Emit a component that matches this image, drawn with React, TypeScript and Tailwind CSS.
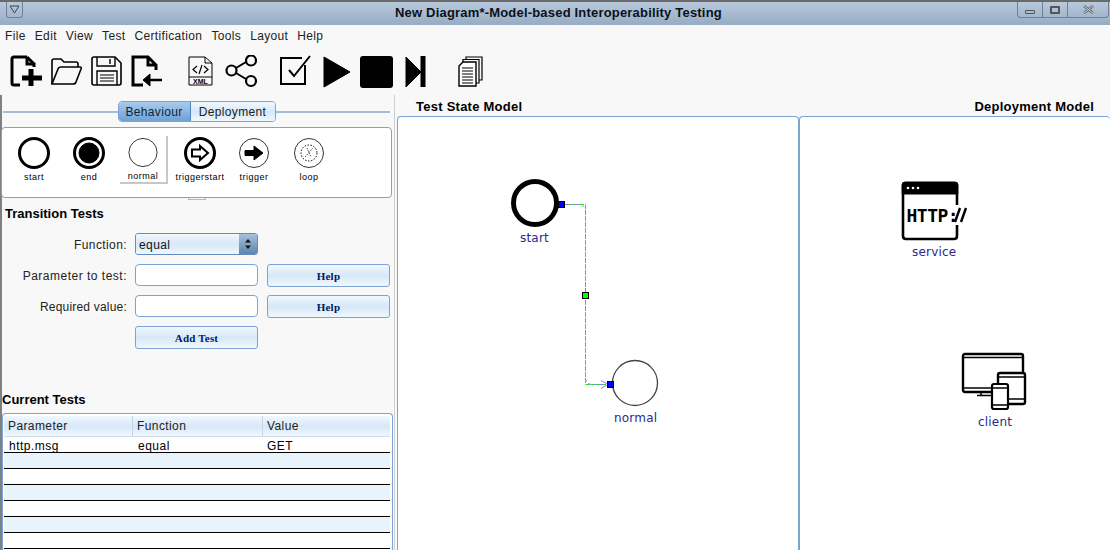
import React from "react";

const Ic = ({ w = 36, h = 36, children }: { w?: number; h?: number; children: React.ReactNode }) => (
  <svg width={w} height={h} viewBox={`0 0 ${w} ${h}`} className="block shrink-0" fill="none" stroke="#000">
    {children}
  </svg>
);

const Menu = ["File", "Edit", "View", "Test", "Certification", "Tools", "Layout", "Help"];

const Toolbar = () => (
  <div className="flex h-[49px] items-start pl-[10px] pt-[9px] bg-[#f8f8f8]">
    <Ic w={33} h={33}>
      <path d="M17 2H4Q2 2 2 4V28Q2 30 4 30H10M17 2V9H24V12M17 2L24 9" strokeWidth="3" />
      <path d="M21 14V31M12 23H32" strokeWidth="5" />
    </Ic>
    <div className="ml-[7px]">
      <Ic w={32} h={33}>
        <path d="M2 29V6Q2 4 4 4H11L14 7H26Q28 7 28 9V12" strokeWidth="1.6" />
        <path d="M2 29L8 14Q8.5 12 11 12H30Q32 12 31 14L26 27Q25.5 29 23 29Z" strokeWidth="1.6" />
      </Ic>
    </div>
    <div className="ml-[9px]">
      <Ic w={31} h={33}>
        <path d="M3 2H24L30 8V28Q30 30 28 30H3Q1 30 1 28V4Q1 2 3 2Z" strokeWidth="1.6" />
        <path d="M6 2V11H24V2M19 4V9" strokeWidth="1.4" />
        <path d="M6 30V16H26V30" strokeWidth="1.4" />
        <path d="M9 20H23M9 23H23M9 26H23" strokeWidth="1.2" />
      </Ic>
    </div>
    <div className="ml-[8px]">
      <Ic w={33} h={33}>
        <path d="M13 30H3V2H18L26 10V15M18 2V10H26" strokeWidth="3" />
        <path d="M32 25H15" strokeWidth="2.5" />
        <path d="M13 25L20 19V31Z" fill="#000" strokeWidth="1" />
      </Ic>
    </div>
    <div className="ml-[24px]">
      <Ic w={28} h={33}>
        <path d="M2 2H18L25 8V30H2Z" strokeWidth="1" />
        <path d="M18 2V8H25" strokeWidth="1" />
        <path d="M2 22H25" strokeWidth="1" />
        <path d="M10 11L6 14.5L10 18M17 11L21 14.5L17 18M15 10L12 19" strokeWidth="1.2" />
        <text x="13.5" y="29" fontSize="7" fontFamily="Liberation Sans" fontWeight="700" textAnchor="middle" fill="#000" stroke="none">XML</text>
      </Ic>
    </div>
    <div className="ml-[10px]">
      <Ic w={33} h={33}>
        <path d="M11 13L21 7M11 18L21 24" strokeWidth="2" />
        <circle cx="6.5" cy="15.5" r="5" strokeWidth="2.2" />
        <circle cx="26" cy="5.5" r="5" strokeWidth="2.2" />
        <circle cx="26" cy="26" r="5" strokeWidth="2.2" />
      </Ic>
    </div>
    <div className="ml-[21px]">
      <Ic w={33} h={33}>
        <path d="M26 10V29H2V3H23" strokeWidth="2" />
        <path d="M10 15L15 21L31 1" strokeWidth="2" />
      </Ic>
    </div>
    <div className="ml-[11px]">
      <Ic w={28} h={33}>
        <path d="M1 2L27 17L1 32Z" fill="#000" strokeWidth="1" strokeLinejoin="round" />
      </Ic>
    </div>
    <div className="ml-[9px] mt-[1px] w-[33px] h-[32px] bg-black rounded-[3px]" />
    <div className="ml-[12px]">
      <Ic w={23} h={33}>
        <path d="M1 2L16 17L1 32Z" fill="#000" strokeWidth="1" />
        <rect x="15.5" y="1" width="5" height="31" fill="#000" stroke="none" />
      </Ic>
    </div>
    <div className="ml-[29px]">
      <Ic w={27} h={33}>
        <path d="M9 5V2H25V25H22M6 7V4.5H22V28H19" strokeWidth="1.2" />
        <path d="M2 11L6 7H19V31H2Z" fill="#fff" strokeWidth="1.4" />
        <path d="M5 13H16M5 16H16M5 19H16M5 22H16M5 25H16M5 28H16" strokeWidth="1.2" />
      </Ic>
    </div>
  </div>
);

const grad = "bg-gradient-to-b from-[#f2f8fd] via-[#d6e8f8] to-[#f0f7fd]";

const Palette = ({ label, children, sel, w }: { label: string; children: React.ReactNode; sel?: boolean; w: string }) => (
  <div className={`flex flex-col items-center ${w} ${sel ? "h-[48px] border-r-2 border-b-2 border-[#c8c8c8]" : ""}`}>
    <svg width="34" height="34" viewBox="0 0 34 34" className="block" fill="none" stroke="#000">
      {children}
    </svg>
    <span className="text-[9px] leading-[12px] mt-[1px] tracking-[0.5px] text-black whitespace-nowrap">{label}</span>
  </div>
);

const Button = ({ children }: { children: string }) => (
  <div className={`h-[23px] w-[123px] pt-[2px] rounded-[3px] border border-[#7ba3d4] ${grad} flex items-center justify-center text-[11px] tracking-[0.2px] font-bold text-[#001a66] font-['Liberation_Serif',serif]`}>
    {children}
  </div>
);

const Input = () => <div className="h-[22px] w-[123px] rounded-[4px] border border-[#7ba3d4] bg-white" />;

const Label = ({ children, cls }: { children: string; cls: string }) => (
  <div className={`w-[125px] text-right text-[12px] leading-[24px] text-[#222] mr-[8px] whitespace-nowrap ${cls}`}>{children}</div>
);

const rows = [0, 1, 2, 3, 4, 5, 6];

const Left = () => (
  <div className="w-[394px] shrink-0 h-full border-l-2 border-l-[#808080] flex flex-col">
    <div className="flex items-center h-[23px] mt-[5px] pl-[1px] pr-[4px]">
      <div className="flex-1 h-[2px] bg-[#a4bcd8]" />
      <div className="flex h-[21px] text-[12px] tracking-[0.35px] rounded-[4px] border border-[#7ba3d4] overflow-hidden">
        <div className="w-[72px] flex items-center justify-center bg-gradient-to-b from-[#a9cbeb] to-[#6fa1d4] text-[#10233a] border-r border-[#4f84bd]">Behaviour</div>
        <div className={`w-[84px] flex items-center justify-center ${grad} text-[#222]`}>Deployment</div>
      </div>
      <div className="flex-1 h-[2px] bg-[#a4bcd8]" />
    </div>
    <div className="h-[71px] w-[391px] mt-[4px] -ml-[1px] rounded-[4px] border border-[#7ba3d4] bg-white flex pl-[7px] pt-[8px]">
      <Palette label="start" w="w-[50px]">
        <circle cx="17" cy="17" r="14.5" strokeWidth="3" />
      </Palette>
      <Palette label="end" w="w-[60px]">
        <circle cx="17" cy="17" r="14.5" strokeWidth="3" />
        <circle cx="17" cy="17" r="10" fill="#000" />
      </Palette>
      <Palette label="normal" w="w-[48px] ml-[1px]" sel>
        <circle cx="17" cy="17" r="14.5" strokeWidth="0.8" />
      </Palette>
      <Palette label="triggerstart" w="w-[64px]">
        <circle cx="17" cy="17" r="14.5" strokeWidth="3" />
        <path d="M9 13.5H17V10L25 17L17 24V20.5H9Z" strokeWidth="2" />
      </Palette>
      <Palette label="trigger" w="w-[44px]">
        <circle cx="17" cy="17" r="14.5" strokeWidth="0.8" />
        <path d="M8 14.5H17V10L26 17L17 24V19.5H8Z" fill="#000" strokeWidth="1" />
      </Palette>
      <Palette label="loop" w="w-[50px] ml-[8px]">
        <circle cx="17" cy="17" r="14.5" strokeWidth="0.8" />
        <circle cx="17" cy="17" r="8" strokeWidth="1" strokeDasharray="1.5 1.5" />
        <path d="M13 21L21 12M15 12L19 21" strokeWidth="0.7" strokeDasharray="1.5 1" />
      </Palette>
    </div>
    <div className="relative h-0">
      <div className="absolute left-[186px] top-0 w-[18px] h-[2px] border-x border-b border-[#a4bcd8]" />
    </div>
    <div className="text-[13px] font-bold leading-[14px] mt-[9px] ml-[3px] text-black">Transition Tests</div>
    <div className="mt-[12px] flex items-start h-[22px]">
      <Label cls="tracking-[0.4px]">Function:</Label>
      <div className="h-[22px] w-[123px] rounded-[3px] border border-[#5f8cc4] flex overflow-hidden">
        <div className={`flex-1 ${grad} text-[12px] tracking-[0.4px] leading-[22px] pl-[3px] text-[#111]`}>equal</div>
        <div className="w-[18px] bg-gradient-to-b from-[#a7c0dc] to-[#5f84ad] flex items-center justify-center">
          <svg width="8" height="12" viewBox="0 0 8 12" className="block"><path d="M4 1L7 4.5H1ZM4 11L1 7.5H7Z" fill="#111" /></svg>
        </div>
      </div>
    </div>
    <div className="mt-[9px] flex items-start h-[23px]">
      <Label cls="tracking-[0.5px]">Parameter to test:</Label>
      <Input />
      <div className="ml-[9px]"><Button>Help</Button></div>
    </div>
    <div className="mt-[8px] flex items-start h-[23px]">
      <Label cls="tracking-[0.2px]">Required value:</Label>
      <Input />
      <div className="ml-[9px]"><Button>Help</Button></div>
    </div>
    <div className="mt-[8px] ml-[133px]"><Button>Add Test</Button></div>
    <div className="text-[13px] font-bold leading-[14px] mt-[44px] text-black">Current Tests</div>
    <div className="mt-[6px] w-[391px] flex-1 min-h-0 rounded-t-[4px] border border-b-0 border-[#7ba3d4] bg-white pt-[2px] pl-[1px] pr-[2px] overflow-hidden">
      <div className={`h-[21px] w-[386px] flex text-[12px] tracking-[0.4px] text-[#222] leading-[20px] ${grad} border-b border-[#cfdce9]`}>
        <div className="w-[129px] pl-[4px] border-r border-[#c4d4e6]">Parameter</div>
        <div className="w-[130px] pl-[4px] border-r border-[#c4d4e6]">Function</div>
        <div className="pl-[4px]">Value</div>
      </div>
      <div className="w-[386px]">
        {rows.map((i) => (
          <div key={i} className={`h-[16px] border-b border-black text-[12px] tracking-[0.5px] leading-[18px] flex ${i % 2 === 1 ? "bg-[#e9f3fb]" : "bg-white"}`}>
            {i === 0 && (
              <>
                <div className="w-[129px] pl-[5px]">http.msg</div>
                <div className="w-[130px] pl-[5px]">equal</div>
                <div className="pl-[4px]">GET</div>
              </>
            )}
          </div>
        ))}
      </div>
    </div>
  </div>
);

const NodeLabel = ({ children, cls }: { children: string; cls: string }) => (
  <div className={`absolute text-[12px] leading-[15px] tracking-[0.2px] text-[#2a2a8c] font-['DejaVu_Sans',sans-serif] ${cls}`}>{children}</div>
);

const Diagram = () => (
  <div className="relative w-[402px] shrink-0 rounded-t-[4px] border border-b-0 border-[#7ba3d4] bg-white overflow-hidden">
    <svg width="300" height="330" viewBox="0 0 300 330" className="absolute left-[90px] top-[50px]" fill="none">
      <circle cx="47" cy="36" r="21.5" stroke="#000" strokeWidth="5" />
      <circle cx="147" cy="216" r="22.5" stroke="#444" strokeWidth="1.3" />
      <path d="M73 37.5H97.5V217.5H118" stroke="#1fe81f" strokeWidth="1" strokeDasharray="5 1" />
      <path d="M76 37.5H90Q97.5 37.5 97.5 45V210Q97.5 217.5 105 217.5H118" stroke="#8a80f0" strokeWidth="1" strokeDasharray="3 3" />
      <path d="M113 213.5L120 217.5L113 221.5" stroke="#8a80f0" />
      <rect x="70.5" y="34.5" width="6" height="6" fill="#0000ff" stroke="#000" strokeWidth="1" />
      <rect x="94.5" y="125.5" width="6" height="6" fill="#00ff00" stroke="#000" strokeWidth="1" />
      <rect x="119.5" y="214.5" width="6" height="6" fill="#0000ff" stroke="#000" strokeWidth="1" />
    </svg>
    <NodeLabel cls="left-[122px] top-[114px]">start</NodeLabel>
    <NodeLabel cls="left-[216px] top-[294px]">normal</NodeLabel>
  </div>
);

const Deploy = () => (
  <div className="relative flex-1 rounded-t-[4px] border-t border-l border-[#7ba3d4] bg-white overflow-hidden">
    <svg width="72" height="62" viewBox="0 0 72 62" className="absolute left-[100px] top-[63px]" fill="none">
      <path d="M5 2H55Q58 2 58 5V14H2V5Q2 2 5 2Z" fill="#000" stroke="#000" />
      <circle cx="8" cy="8" r="1.3" fill="#fff" />
      <circle cx="13" cy="8" r="1.3" fill="#fff" />
      <circle cx="18" cy="8" r="1.3" fill="#fff" />
      <path d="M3 14V56Q3 59 6 59H54Q57 59 57 56V45M57 14V25" stroke="#000" strokeWidth="2.6" />
      <text x="6.5" y="42" fontSize="18" fontWeight="700" fontFamily="DejaVu Sans Mono" letterSpacing="-0.5" fill="#000">HTTP:</text>
      <path d="M55 42L60 28M61 42L66 28" stroke="#000" strokeWidth="2.4" />
    </svg>
    <svg width="70" height="60" viewBox="0 0 70 60" className="absolute left-[161px] top-[235px]" fill="none" stroke="#000">
      <path d="M30 40H4Q2 40 2 38V4Q2 2 4 2H60Q62 2 62 4V21" strokeWidth="2.4" />
      <path d="M2 5.5H62M2 36H30M20 40V43M16 43.5H30" strokeWidth="1.5" />
      <rect x="37" y="21" width="27" height="31" rx="2" strokeWidth="2.4" fill="#fff" />
      <path d="M37 47H64M37 25H64" strokeWidth="1.5" />
      <rect x="31" y="32" width="16" height="25" rx="2" strokeWidth="2.2" fill="#fff" />
      <path d="M31 36H47M31 53H47" strokeWidth="1.4" />
    </svg>
    <NodeLabel cls="left-[112px] top-[128px]">service</NodeLabel>
    <NodeLabel cls="left-[178px] top-[298px]">client</NodeLabel>
  </div>
);

export default function App() {
  return (
    <div className="w-[1110px] h-[550px] overflow-hidden bg-[#f8f8f8] font-['Liberation_Sans',sans-serif] flex flex-col">
      <div className="h-[25px] shrink-0 border-t-2 border-[#6a6a6a] bg-gradient-to-b from-[#b8c9dc] to-[#96acc4] flex items-start relative">
        <div className="ml-[6px] w-[17px] h-[16px] border border-t-0 border-[#6f8193] rounded-b-[3px] flex items-center justify-center">
          <svg width="11" height="9" viewBox="0 0 11 9" className="block"><path d="M1 1H10L5.5 8Z" fill="none" stroke="#444" /></svg>
        </div>
        <div className="absolute left-[395px] top-[3px] text-[13px] leading-[16px] font-bold text-[#0c1118] tracking-[0.19px] whitespace-nowrap">New Diagram*-Model-based Interoperability Testing</div>
        <div className="ml-auto mr-[1px] h-[16px] w-[92px] border border-t-0 border-[#6f8193] rounded-b-[4px] flex">
          <div className="w-[25px] border-r border-[#6f8193] flex items-center justify-center">
            <div className="w-[10px] h-[4px] mt-[4px] border border-[#555] rounded-[1px]" />
          </div>
          <div className="w-[25px] border-r border-[#6f8193] flex items-center justify-center">
            <div className="w-[10px] h-[8px] border-2 border-[#555] rounded-[1px]" />
          </div>
          <div className="flex-1 flex items-center justify-center">
            <svg width="11" height="9" viewBox="0 0 11 9" className="block">
              <path d="M1 1L10 8M10 1L1 8" stroke="#666" strokeWidth="2.6" />
              <path d="M1 1L10 8M10 1L1 8" stroke="#c5d3e2" strokeWidth="1" />
            </svg>
          </div>
        </div>
      </div>
      <div className="h-[21px] shrink-0 flex items-center pl-[5px] gap-[9px] text-[12px] text-[#222] tracking-[0.35px]">
        {Menu.map((m) => (
          <span key={m}>{m}</span>
        ))}
      </div>
      <Toolbar />
      <div className="flex flex-1 min-h-0">
        <Left />
        <div className="flex-1 min-w-0 flex flex-col border-l border-[#d0d0d0] pl-[2px]">
          <div className="h-[21px] shrink-0 flex items-center justify-between pl-[19px] pr-[16px] pt-[3px] text-[13px] font-bold text-black tracking-[0.25px]">
            <span>Test State Model</span>
            <span>Deployment Model</span>
          </div>
          <div className="flex flex-1 min-h-0">
            <Diagram />
            <Deploy />
          </div>
        </div>
      </div>
    </div>
  );
}
